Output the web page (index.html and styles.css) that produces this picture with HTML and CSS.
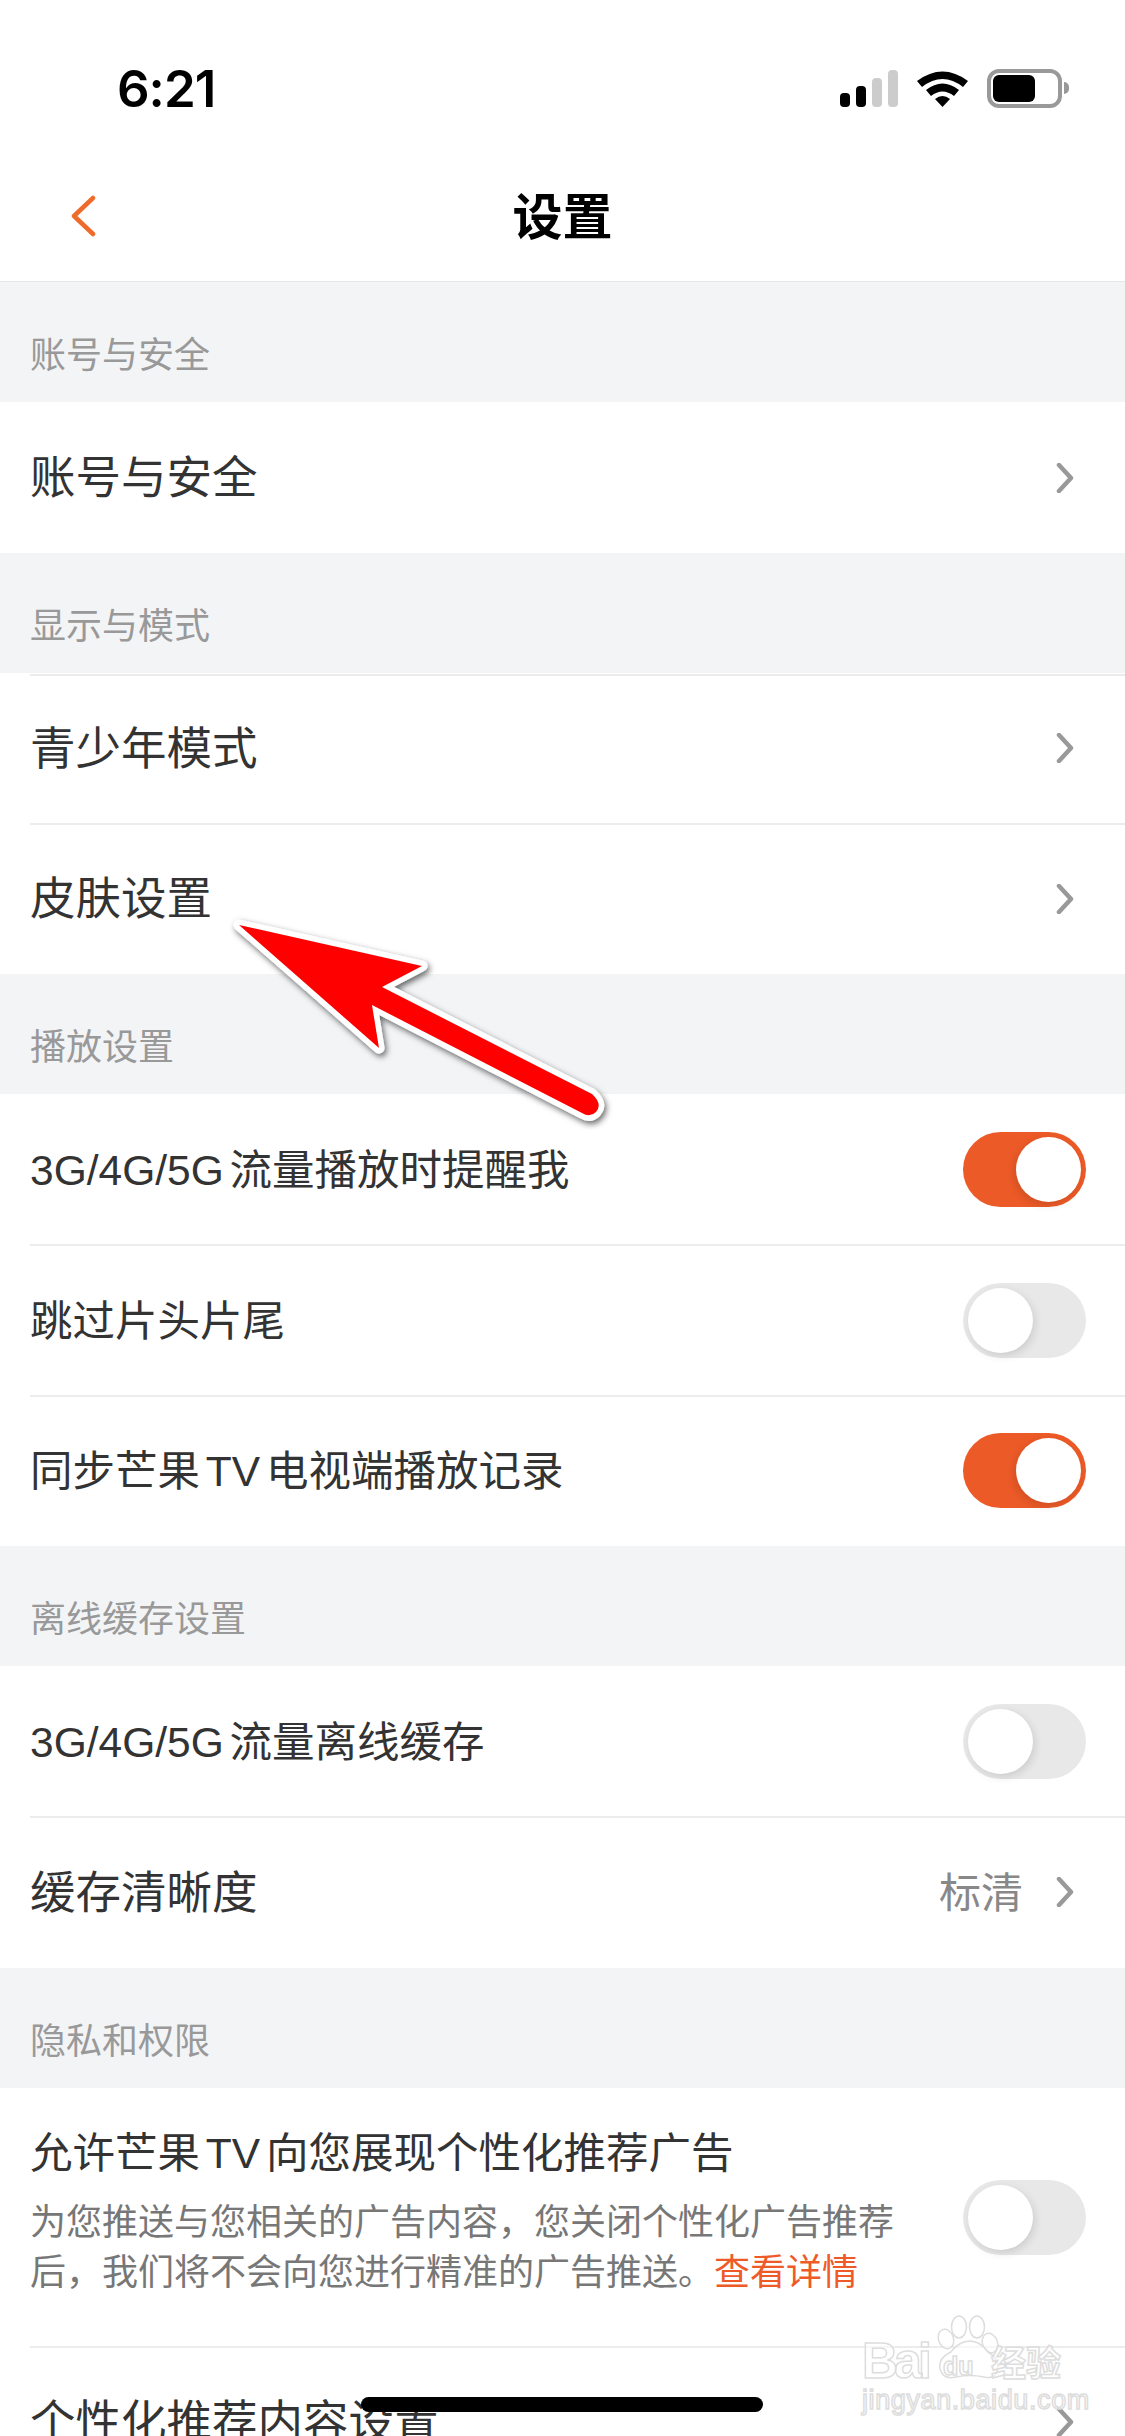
FILE: index.html

```html
<!DOCTYPE html>
<html lang="zh-CN">
<head>
  <meta charset="UTF-8" />
  <meta name="viewport" content="width=device-width, initial-scale=1.0" />
  <title>设置</title>
  <link rel="stylesheet" href="styles.css">
</head>
<body>
  <div class="screen">
    <div class="statusbar">
      <div class="time">6:21</div>
      <div class="status-icons">
        <svg class="signal" width="58" height="37" viewBox="0 0 58 37">
          <rect x="0" y="23" width="10" height="14" rx="4" fill="#000"/>
          <rect x="16" y="16" width="10" height="21" rx="4" fill="#000"/>
          <rect x="32" y="8" width="10" height="29" rx="4" fill="#ccc"/>
          <rect x="48" y="0" width="10" height="37" rx="4" fill="#ccc"/>
        </svg>
        <svg class="wifi" width="51" height="37" viewBox="0 0 51 37">
          <path d="M0 11 Q25.500 -8 51 11 L46 17 Q25.500 1 5 17 Z" fill="#000"/>
          <path d="M9 20 Q25.500 7 42 20 L37 26 Q25.500 17 14 26 Z" fill="#000"/>
          <path d="M18 29 Q25.500 23 33 29 L25.500 37 Z" fill="#000"/>
        </svg>
        <div class="battery">
          <div class="battery-level"></div>
          <div class="battery-nub"></div>
        </div>
      </div>
    </div>

    <div class="navbar">
      <svg class="back" width="26" height="42" viewBox="0 0 26 42">
        <path d="M23 3 L4 21 L23 39" fill="none" stroke="#ee6b2c" stroke-width="4.500" stroke-linecap="round" stroke-linejoin="round"/>
      </svg>
      <h1>设置</h1>
    </div>

    <div class="section-title">账号与安全</div>
    <div class="row">
      <div class="row-label big">账号与安全</div>
      <svg class="chevron" width="20" height="30" viewBox="0 0 20 30"><path d="M4 2 L16 15 L4 28" /></svg>
    </div>

    <div class="section-title">显示与模式</div>
    <div class="row row-top">
      <div class="row-label big">青少年模式</div>
      <svg class="chevron" width="20" height="30" viewBox="0 0 20 30"><path d="M4 2 L16 15 L4 28" /></svg>
    </div>
    <div class="row">
      <div class="row-label big">皮肤设置</div>
      <svg class="chevron" width="20" height="30" viewBox="0 0 20 30"><path d="M4 2 L16 15 L4 28" /></svg>
    </div>

    <div class="section-title">播放设置</div>
    <div class="row">
      <div class="row-label">3G/4G/5G 流量播放时提醒我</div>
      <div class="toggle on"><span></span></div>
    </div>
    <div class="row">
      <div class="row-label">跳过片头片尾</div>
      <div class="toggle"><span></span></div>
    </div>
    <div class="row">
      <div class="row-label">同步芒果 TV 电视端播放记录</div>
      <div class="toggle on"><span></span></div>
    </div>

    <div class="section-title">离线缓存设置</div>
    <div class="row">
      <div class="row-label">3G/4G/5G 流量离线缓存</div>
      <div class="toggle"><span></span></div>
    </div>
    <div class="row">
      <div class="row-label big">缓存清晰度</div>
      <div class="row-value">标清</div>
      <svg class="chevron" width="20" height="30" viewBox="0 0 20 30"><path d="M4 2 L16 15 L4 28" /></svg>
    </div>

    <div class="section-title">隐私和权限</div>
    <div class="row row-tall">
      <div class="row-text">
        <div class="row-label">允许芒果 TV 向您展现个性化推荐广告</div>
        <div class="row-desc">为您推送与您相关的广告内容，您关闭个性化广告推荐后，我们将不会向您进行精准的广告推送。<a class="link">查看详情</a></div>
      </div>
      <div class="toggle"><span></span></div>
    </div>
    <div class="row">
      <div class="row-label big">个性化推荐内容设置</div>
      <svg class="chevron" width="20" height="30" viewBox="0 0 20 30"><path d="M4 2 L16 15 L4 28" /></svg>
    </div>

    <!-- annotation arrow on top of the list -->
    <svg class="arrow" width="400" height="225" viewBox="220 905 400 225">
      <defs>
        <filter id="arrowShadow" x="-10%" y="-10%" width="120%" height="125%">
          <feDropShadow dx="2" dy="3" stdDeviation="3" flood-color="#000" flood-opacity="0.6"/>
        </filter>
      </defs>
      <path filter="url(#arrowShadow)" d="M239 925 L422 966 L382 987 L592 1094 Q603 1104 596 1112 Q590 1118 582 1113 L372 1005 L379 1048 Z" fill="#f00" stroke="#fff" stroke-width="11" stroke-linejoin="round"/>
      <path d="M239 925 L422 966 L382 987 L592 1094 Q603 1104 596 1112 Q590 1118 582 1113 L372 1005 L379 1048 Z" fill="#f00"/>
    </svg>

    <!-- baidu watermark -->
    <div class="watermark">
      <svg class="paw" width="90" height="70" viewBox="0 0 90 70">
        <g fill="#fff" fill-opacity="0.6" stroke="#ddd" stroke-width="1.500">
          <ellipse cx="14" cy="25" rx="7.500" ry="10" transform="rotate(-20 14 25)"/>
          <ellipse cx="27" cy="13" rx="7.500" ry="11"/>
          <ellipse cx="45" cy="13" rx="7.500" ry="11"/>
          <ellipse cx="58" cy="29" rx="7.500" ry="10" transform="rotate(-20 58 29)"/>
          <path d="M38 27 Q27 27 19 38 Q6 44 8 55 Q11 66 24 63 Q38 60 52 63 Q64 66 66 54 Q66 44 56 38 Q48 27 38 27 Z"/>
        </g>
      </svg>
      <div class="wm-bai">Bai</div>
      <div class="wm-du">du</div>
      <div class="wm-cn">经验</div>
      <div class="wm-url">jingyan.baidu.com</div>
    </div>

    <div class="home-indicator"></div>
  </div>
</body>
</html>
```

FILE: styles.css

```css
html, body {
  margin: 0;
  padding: 0;
}
body {
  font-family: "Liberation Sans", "Noto Sans CJK SC", sans-serif;
  background: #fff;
  color: #333;
}
.screen {
  position: relative;
  width: 1125px;
  height: 2436px;
  overflow: hidden;
  background: #fff;
}
.statusbar {
  height: 132px;
  padding: 66px 63px 0 117px;
  box-sizing: border-box;
  display: flex;
  justify-content: space-between;
  align-items: flex-start;
}
.time {
  font-family: Inter, "Liberation Sans", sans-serif;
  font-size: 51px;
  font-weight: 600;
  line-height: 45px;
  letter-spacing: -1px;
  color: #000;
}
.status-icons {
  display: flex;
  align-items: center;
  gap: 19px;
  margin-top: 3px;
}
.battery {
  position: relative;
  width: 75px;
  height: 39px;
  box-sizing: border-box;
  border: 4px solid #999;
  border-radius: 12px;
  padding: 2px;
}
.battery-level {
  width: 42px;
  height: 27px;
  background: #000;
  border-radius: 6px;
}
.battery-nub {
  position: absolute;
  right: -11px;
  top: 9px;
  width: 5px;
  height: 12px;
  background: #999;
  border-radius: 0 6px 6px 0;
}
.navbar {
  height: 150.3px;
  padding: 12px 0 0 70px;
  box-sizing: border-box;
  border-bottom: 1px solid #e6e6e6;
  position: relative;
  display: flex;
  align-items: center;
}
.navbar h1 {
  position: absolute;
  left: 0;
  right: 0;
  margin: 0;
  text-align: center;
  font-size: 50px;
  font-weight: 700;
  color: #000;
}
.back {
  margin-top: 6px;
}
.section-title {
  height: 120px;
  padding: 49px 0 0 30px;
  box-sizing: border-box;
  background: #f3f4f6;
  font-size: 36px;
  line-height: 50px;
  color: #999;
}
.row {
  height: 150.67px;
  padding: 0 26px 0 30px;
  box-sizing: border-box;
  display: flex;
  align-items: center;
  background: #fff;
  position: relative;
}
.row + .row::before,
.row-top::before {
  content: "";
  position: absolute;
  left: 30px;
  right: 0;
  top: -1px;
  height: 2px;
  background: #ececec;
}
.row-top::before {
  top: 1px;
}
.row-label {
  flex: 1;
  padding-top: 3px;
  font-size: 42.5px;
  line-height: 50px;
  word-spacing: -6px;
  color: #333;
}
.row-label.big {
  font-size: 45.5px;
}
.row-value {
  font-size: 42px;
  color: #888;
  margin: 0 32px 6px 0;
}
.chevron {
  margin-right: 24px;
}
.chevron path {
  fill: none;
  stroke: #999;
  stroke-width: 4.500;
  stroke-linecap: round;
  stroke-linejoin: round;
}
.toggle {
  position: relative;
  width: 123px;
  height: 75px;
  border-radius: 38px;
  background: #e8e8e8;
  flex: none;
  margin-right: 13px;
}
.toggle span {
  position: absolute;
  left: 5px;
  top: 5px;
  width: 65px;
  height: 65px;
  border-radius: 50%;
  background: #fff;
  box-shadow: 2px 3px 8px rgba(0, 0, 0, 0.12);
}
.toggle.on {
  background: #ec5a27;
}
.toggle.on span {
  left: auto;
  right: 5px;
  box-shadow: -2px 3px 8px rgba(0, 0, 0, 0.12);
}
.row-tall {
  height: 259px;
}
.row-text {
  flex: 1;
  margin-right: 60px;
  padding-bottom: 12px;
}
.row-text .row-label {
  padding-top: 0;
  line-height: 60px;
}
.row-desc {
  font-size: 36px;
  line-height: 50px;
  color: #777;
  margin-top: 14px;
}
.link {
  color: #ee5a28;
}
.arrow {
  position: absolute;
  left: 220px;
  top: 905px;
}
.watermark {
  position: absolute;
  left: 840px;
  top: 2300px;
  width: 250px;
  height: 130px;
}
.watermark div {
  position: absolute;
  white-space: nowrap;
  color: rgba(255, 255, 255, 0.5);
  -webkit-text-stroke: 1.5px #ddd;
}
.paw {
  position: absolute;
  left: 92px;
  top: 14px;
}
.wm-bai {
  left: 22px;
  top: 36px;
  font-size: 50px;
  line-height: 50px;
  font-weight: 700;
  letter-spacing: -4px;
}
.wm-du {
  left: 103px;
  top: 52px;
  font-size: 25px;
  line-height: 28px;
  font-weight: 700;
}
.wm-cn {
  left: 151px;
  top: 41px;
  font-family: "Noto Sans CJK SC", sans-serif;
  font-size: 35px;
  line-height: 40px;
  font-weight: 700;
}
.wm-url {
  left: 22px;
  top: 84px;
  font-size: 27px;
  line-height: 32px;
  letter-spacing: 0.6px;
}
.home-indicator {
  position: absolute;
  left: 361px;
  top: 2397px;
  width: 402px;
  height: 15px;
  background: #000;
  border-radius: 8px;
}
```
